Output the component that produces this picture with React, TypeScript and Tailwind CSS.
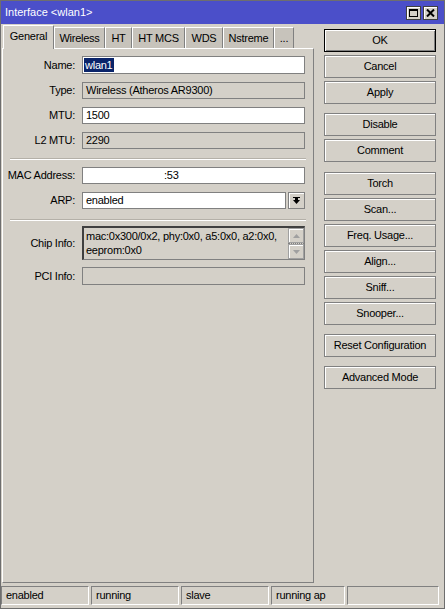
import React from 'react';

const font = { fontFamily: '"Liberation Sans", Arial, sans-serif' };

type RowProps = { label: string; children: React.ReactNode; className?: string };

const Row = ({ label, children, className = '' }: RowProps) => (
    <div className={`flex items-center ${className}`}>
        <div className="w-[72px] text-right text-black">{label}</div>
        <div className="ml-[7px] w-[223px] flex">{children}</div>
    </div>
);

const Box = ({ value, editable = false }: { value?: React.ReactNode; editable?: boolean }) => (
    <div
        className={`flex-1 h-[17px] border border-[#808080] px-[3px] leading-[15px] whitespace-nowrap overflow-hidden ${editable ? 'bg-white' : 'bg-[#d4d0c8]'}`}
    >
        {value}
    </div>
);

const Sep = ({ className = '' }: { className?: string }) => (
    <div className={`ml-[7px] w-[296px] border-t border-[#b4b0a8] border-b border-b-white ${className}`} />
);

const Btn = ({ label, primary = false, className = '' }: { label: string; primary?: boolean; className?: string }) => (
    <div
        className={`h-[23px] w-[112px] flex items-center justify-center border text-black ${primary ? 'border-black shadow-[inset_1px_1px_0_#ffffff,inset_-1px_-1px_0_#808080]' : 'border-[#808080] shadow-[inset_1px_1px_0_#ffffff]'} ${className}`}
    >
        {label}
    </div>
);

const tabs = [
    { name: 'Wireless', w: 'w-[51px]' },
    { name: 'HT', w: 'w-[27px]' },
    { name: 'HT MCS', w: 'w-[53px]' },
    { name: 'WDS', w: 'w-[38px]' },
    { name: 'Nstreme', w: 'w-[51px]' },
    { name: '...', w: 'w-[20px]' },
];

const status = [
    { text: 'enabled', w: 'w-[88px]' },
    { text: 'running', w: 'w-[88px]' },
    { text: 'slave', w: 'w-[88px]' },
    { text: 'running ap', w: 'w-[74px]' },
    { text: '', w: 'w-[92px]' },
];

export default function App() {
    return (
        <div style={font} className="w-[445px] h-[609px] border border-[#6e6e6e] bg-[#d4d0c8] flex flex-col text-[11px] tracking-[-0.25px] text-black select-none">
            {/* title bar */}
            <div className="h-[23px] bg-[#4b4fc9] flex items-center pl-[4px] pr-[6px]">
                <span className="text-white tracking-normal">Interface &lt;wlan1&gt;</span>
                <div className="ml-auto flex gap-[2px]">
                    <div className="w-[15px] h-[14px] bg-[#d4d0c8] border border-[#404040] shadow-[inset_1px_1px_0_#ffffff] flex items-center justify-center">
                        <div className="w-[9px] h-[8px] border border-black border-t-2" />
                    </div>
                    <div className="w-[15px] h-[14px] bg-[#d4d0c8] border border-[#404040] shadow-[inset_1px_1px_0_#ffffff] flex items-center justify-center">
                        <svg width="9" height="8" viewBox="0 0 9 8">
                            <path d="M1 0.5 L8 7.5 M8 0.5 L1 7.5" stroke="black" strokeWidth="2" />
                        </svg>
                    </div>
                </div>
            </div>

            {/* body */}
            <div className="flex-1 flex pl-[1px]">
                <div className="w-[312px] flex flex-col pb-[1px]">
                    {/* tabs */}
                    <div className="h-[24px] flex items-end pl-[1px]">
                        <div className="w-[51px] h-[24px] bg-[#d4d0c8] border-t border-l border-white border-r border-r-[#808080] flex items-center justify-center pb-[2px] relative top-[1px] z-10">
                            General
                        </div>
                        {tabs.map((t) => (
                            <div
                                key={t.name}
                                className={`${t.w} h-[21px] bg-[#c7c3bb] border-t border-l border-white border-r border-r-[#808080] flex items-center justify-center pt-[1px]`}
                            >
                                {t.name}
                            </div>
                        ))}
                    </div>
                    {/* panel */}
                    <div className="flex-1 border-t border-l border-white border-r border-b border-r-[#808080] border-b-[#808080] pt-[7px]">
                        <Row label="Name:">
                            <div className="flex-1 h-[18px] border border-[#808080] bg-white px-[1px] leading-[16px] flex items-center">
                                <span className="bg-[#0a246a] text-white px-[1px] leading-[14px]">wlan1</span>
                            </div>
                        </Row>
                        <Row label="Type:" className="mt-[8px]">
                            <Box value="Wireless (Atheros AR9300)" />
                        </Row>
                        <Row label="MTU:" className="mt-[8px]">
                            <Box value="1500" editable />
                        </Row>
                        <Row label="L2 MTU:" className="mt-[8px]">
                            <Box value="2290" />
                        </Row>
                        <Sep className="mt-[9px]" />
                        <Row label="MAC Address:" className="mt-[7px]">
                            <Box value={<span className="pl-[78px]">:53</span>} editable />
                        </Row>
                        <Row label="ARP:" className="mt-[8px]">
                            <div className="flex-1 h-[17px] border border-[#808080] bg-white px-[3px] leading-[15px]">enabled</div>
                            <div className="ml-[2px] w-[17px] h-[17px] border border-[#808080] shadow-[inset_1px_1px_0_#ffffff] flex items-center justify-center">
                                <svg width="7" height="8" viewBox="0 0 7 8">
                                    <rect x="0" y="0" width="7" height="1" fill="black" />
                                    <path d="M0 3 H7 L3.5 7 Z" fill="black" />
                                    <rect x="2" y="1" width="3" height="2" fill="black" />
                                </svg>
                            </div>
                        </Row>
                        <Sep className="mt-[10px]" />
                        <Row label="Chip Info:" className="mt-[5px]">
                            <div className="flex-1 h-[34px] border-t-2 border-l-2 border-t-[#404040] border-l-[#404040] border-r border-b border-r-[#808080] border-b-[#808080] flex">
                                <div className="flex-1 pl-[2px] leading-[14px] pt-[1px] whitespace-nowrap overflow-hidden">
                                    mac:0x300/0x2, phy:0x0, a5:0x0, a2:0x0,
                                    <br />
                                    eeprom:0x0
                                </div>
                                <div className="w-[16px] flex flex-col">
                                    <div className="h-[15px] border border-[#a0a0a0] shadow-[inset_1px_1px_0_#ffffff] flex items-center justify-center">
                                        <svg width="7" height="4" viewBox="0 0 7 4"><path d="M0 4 H7 L3.5 0 Z" fill="#a0a0a0" /></svg>
                                    </div>
                                    <div className="h-[1px] border-t border-dotted border-[#808080]" />
                                    <div className="h-[15px] border border-[#a0a0a0] shadow-[inset_1px_1px_0_#ffffff] flex items-center justify-center">
                                        <svg width="7" height="4" viewBox="0 0 7 4"><path d="M0 0 H7 L3.5 4 Z" fill="#a0a0a0" /></svg>
                                    </div>
                                </div>
                            </div>
                        </Row>
                        <Row label="PCI Info:" className="mt-[7px]">
                            <div className="flex-1 h-[18px] border border-[#808080] bg-[#d4d0c8]" />
                        </Row>
                    </div>
                </div>

                {/* buttons */}
                <div className="ml-[10px] pt-[5px] flex flex-col gap-[3px]">
                    <Btn label="OK" primary />
                    <Btn label="Cancel" />
                    <Btn label="Apply" />
                    <Btn label="Disable" className="mt-[6px]" />
                    <Btn label="Comment" />
                    <Btn label="Torch" className="mt-[7px]" />
                    <Btn label="Scan..." />
                    <Btn label="Freq. Usage..." />
                    <Btn label="Align..." />
                    <Btn label="Sniff..." />
                    <Btn label="Snooper..." />
                    <Btn label="Reset Configuration" className="mt-[6px]" />
                    <Btn label="Advanced Mode" className="mt-[6px]" />
                </div>
            </div>

            {/* status bar */}
            <div className="h-[19px] mt-[2px] mb-[3px] flex gap-[2px]">
                {status.map((s, i) => (
                    <div
                        key={i}
                        className={`${s.w} h-[19px] border-t border-l border-t-[#808080] border-l-[#808080] border-r border-b border-r-white border-b-white pl-[4px] leading-[17px]`}
                    >
                        {s.text}
                    </div>
                ))}
            </div>
        </div>
    );
}
